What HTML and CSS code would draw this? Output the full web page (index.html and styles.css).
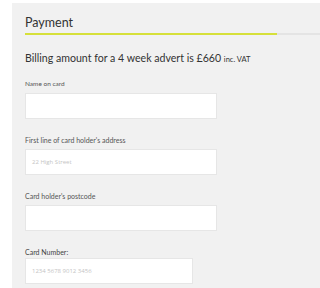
FILE: index.html
```html
<!DOCTYPE html>
<html>
<head>
<meta charset="utf-8">
<link rel="stylesheet" href="styles.css">
</head>
<body>
<div class="panel">
  <h2 class="title">Payment</h2>
  <div class="rule"></div>
  <p class="billing">Billing amount for a 4 week advert is £660 <span class="vat">inc. VAT</span></p>
  <form class="form">
    <label class="label label-first">Name on card</label>
    <div class="input"></div>
    <label class="label">First line of card holder's address</label>
    <div class="input"><span class="ph">22 High Street</span></div>
    <label class="label">Card holder's postcode</label>
    <div class="input"></div>
    <label class="label label-card">Card Number:</label>
    <div class="input input-short"><span class="ph">1234 5678 9012 3456</span></div>
  </form>
</div>
</body>
</html>
```
FILE: styles.css
```css
html, body { margin: 0; padding: 0; background: #fff; }
body { padding: 3px 0 0 12px; overflow: hidden; height: 288px; box-sizing: border-box; }
.panel {
  background: #f1f1f1;
  height: 285px;
  overflow: hidden;
  padding: 12px 0 0 13px;
  box-sizing: border-box;
  font-family: Lato, "Open Sans", sans-serif;
  color: #3a3a3a;
}
.title {
  margin: 0;
  font-family: Lato, sans-serif;
  font-weight: 400;
  font-size: 12.5px;
  line-height: 16px;
  color: #333;
}
.rule {
  margin-top: 2px;
  height: 2px;
  width: 252px;
  background: #d6e03a;
  box-shadow: 252px 0 0 #e4e4e4;
}
.billing {
  margin: 15px 0 0;
  font-size: 10.6px;
  line-height: 16px;
  color: #333;
}
.vat { font-size: 7.5px; }
.form { display: flex; flex-direction: column; align-items: flex-start; }
.label {
  font-family: Lato, sans-serif;
  font-size: 7px;
  line-height: 10px;
  color: #555;
  margin-top: 16px;
  margin-bottom: 4px;
}
.label-first { margin-top: 11px; font-size: 6.5px; }
.label-card { margin-bottom: 1px; color: #444; }
.input {
  width: 184px;
  height: 24px;
  background: #fff;
  border: 1px solid #e6e6e6;
  display: flex;
  align-items: center;
  padding-left: 6px;
  box-sizing: content-box;
}
.input-short { width: 160px; }
.ph {
  font-family: "Open Sans", sans-serif;
  font-size: 6px;
  color: #c4c4c4;
}
```
